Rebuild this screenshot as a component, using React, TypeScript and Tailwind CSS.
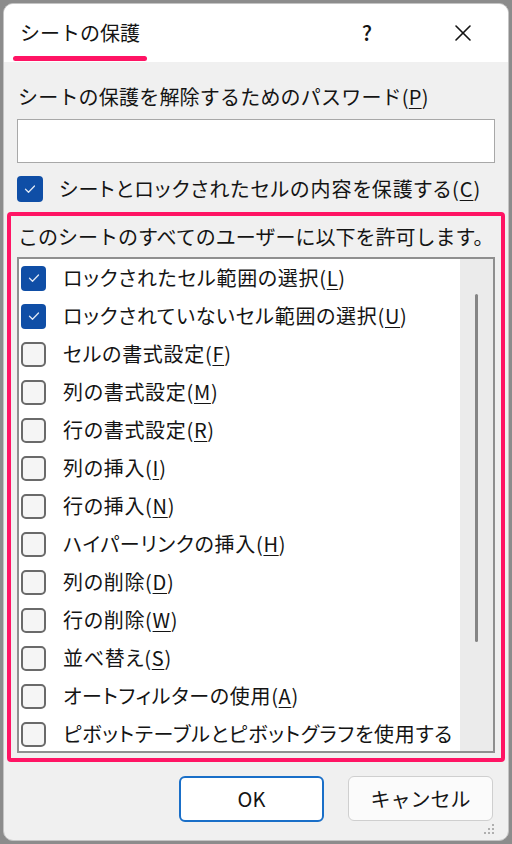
import { X } from 'lucide-react';

type Item = { label: string; key?: string; checked?: boolean };

const items: Item[] = [
  { label: 'ロックされたセル範囲の選択', key: 'L', checked: true },
  { label: 'ロックされていないセル範囲の選択', key: 'U', checked: true },
  { label: 'セルの書式設定', key: 'F' },
  { label: '列の書式設定', key: 'M' },
  { label: '行の書式設定', key: 'R' },
  { label: '列の挿入', key: 'I' },
  { label: '行の挿入', key: 'N' },
  { label: 'ハイパーリンクの挿入', key: 'H' },
  { label: '列の削除', key: 'D' },
  { label: '行の削除', key: 'W' },
  { label: '並べ替え', key: 'S' },
  { label: 'オートフィルターの使用', key: 'A' },
  { label: 'ピボットテーブルとピボットグラフを使用する' },
];

function Mnemonic({ k }: { k: string }) {
  return (
    <>
      (<span className="underline underline-offset-[3px] decoration-1">{k}</span>)
    </>
  );
}

function Check({ checked, size = 'w-[25px] h-[25px]' }: { checked?: boolean; size?: string }) {
  if (checked) {
    return (
      <div className={`${size} shrink-0 rounded-[4px] bg-[#0f4ea6] flex items-center justify-center`}>
        <svg width="14" height="14" viewBox="0 0 14 14" fill="none">
          <path d="M2.5 7.3l3 3 6-6.3" stroke="#dfe8f5" strokeWidth="1.3" strokeLinecap="round" strokeLinejoin="round" />
        </svg>
      </div>
    );
  }
  return <div className={`${size} shrink-0 rounded-[5px] border-2 border-[#6a6a6a] bg-[#f5f5f5]`} />;
}

export default function App() {
  return (
    <div
      className="w-[512px] h-[844px] bg-[#8c8c8c] p-[3px] text-[#141414]"
      style={{ fontFamily: '"Noto Sans CJK JP", "Noto Sans", sans-serif' }}
    >
      <div className="h-full flex flex-col rounded-[10px] border border-[#c4c4c4] bg-[#f0f0f0] overflow-hidden">
        {/* Title bar */}
        <div className="h-[58px] bg-white flex items-center shrink-0">
          <div className="relative pl-[16px] text-[20px] leading-[28px]">
            シートの保護
            <div className="absolute left-[9px] top-[37px] w-[134px] h-[5px] rounded-full bg-[#ff1464]" />
          </div>
          <div className="ml-auto w-[30px] text-center text-[21px] font-medium mr-[58px]">?</div>
          <div className="w-[46px] flex justify-center mr-[22px]">
            <X className="w-[28px] h-[28px]" strokeWidth={1.4} />
          </div>
        </div>

        {/* Body */}
        <div className="flex-1 flex flex-col px-[13px] pt-[21px]">
          <div className="text-[20px] leading-[28px] pl-[1px] tracking-[0.2px] whitespace-nowrap">
            シートの保護を解除するためのパスワード<Mnemonic k="P" />
          </div>
          <div className="mt-[8px] h-[44px] bg-white border border-[#a8a8a8]" />

          <div className="mt-[13px] flex items-center gap-[16px] h-[26px]">
            <Check checked size="w-[26px] h-[26px]" />
            <div className="text-[20px] leading-[28px] whitespace-nowrap [font-feature-settings:'palt'] tracking-[1px]">
              シートとロックされたセルの内容を保護する<Mnemonic k="C" />
            </div>
          </div>

          {/* Highlighted permissions */}
          <div className="mt-[10px] -mx-[10px] border-[4px] border-[#ff1464] rounded-[4px] px-[6px] pb-[5px] pt-[7px]">
            <div className="text-[20px] leading-[28px] pl-[1px] whitespace-nowrap">
              このシートのすべてのユーザーに以下を許可します。
            </div>
            <div className="mt-[6px] h-[496px] border-2 border-[#8f8f8f] bg-white flex">
              <div className="flex-1 flex flex-col pl-[2px]">
                {items.map((it) => (
                  <div key={it.label} className="h-[38px] shrink-0 flex items-center gap-[17px]">
                    <Check checked={it.checked} />
                    <div className="text-[20px] leading-[28px] whitespace-nowrap [font-feature-settings:'palt'] tracking-[0.7px]">
                      {it.label}
                      {it.key && <Mnemonic k={it.key} />}
                    </div>
                  </div>
                ))}
              </div>
              <div className="w-[33px] bg-[#ebebeb] flex justify-center pt-[35px]">
                <div className="w-[3px] h-[348px] rounded-full bg-[#858585]" />
              </div>
            </div>
          </div>

          {/* Buttons */}
          <div className="mt-[14px] flex justify-end gap-[24px] pr-[2px]">
            <button className="w-[145px] h-[46px] rounded-[6px] border-2 border-[#1a6fc8] bg-white text-[20px]">
              OK
            </button>
            <button className="w-[145px] h-[45px] rounded-[6px] border border-[#cfcfcf] bg-[#fbfbfb] text-[20px]">
              キャンセル
            </button>
          </div>
          <div className="flex justify-end mt-[1px]">
            <svg width="12" height="12" viewBox="0 0 12 12">
              <circle cx="10" cy="2" r="1" fill="#9a9a9a" />
              <circle cx="6" cy="6" r="1" fill="#9a9a9a" />
              <circle cx="10" cy="6" r="1" fill="#9a9a9a" />
              <circle cx="2" cy="10" r="1" fill="#9a9a9a" />
              <circle cx="6" cy="10" r="1" fill="#9a9a9a" />
              <circle cx="10" cy="10" r="1" fill="#9a9a9a" />
            </svg>
          </div>
        </div>
      </div>
    </div>
  );
}
